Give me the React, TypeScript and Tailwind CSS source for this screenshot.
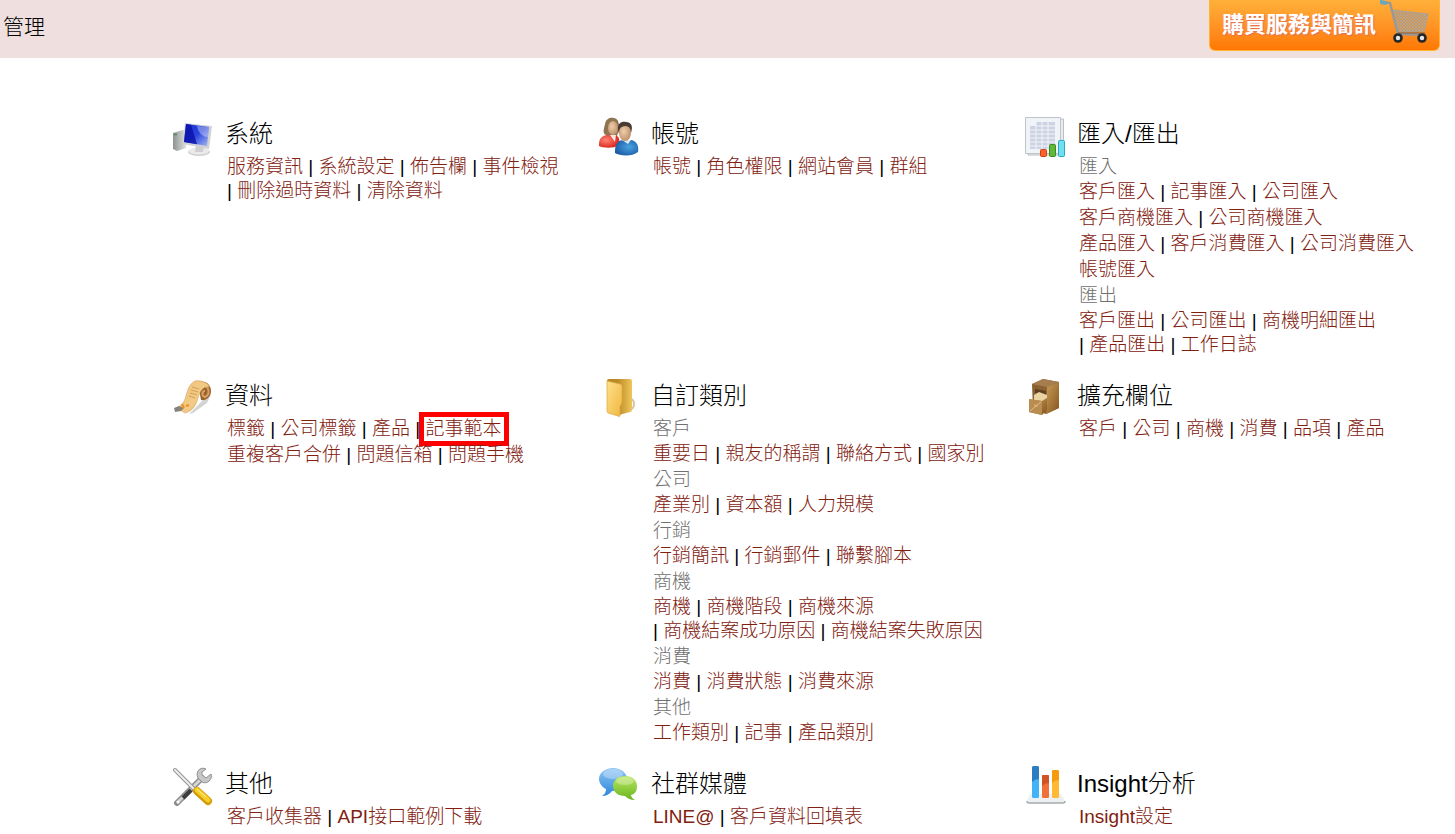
import type { ReactNode } from "react";

type Item = { text: string; marked?: boolean };
type Row = { label: string } | { links: (string | Item)[] };
type Section = { title: string; icon: ReactNode; rows: Row[] };

const SystemIcon = () => (
    <svg viewBox="0 0 40 40" className="size-10">
        <defs>
            <linearGradient id="screen" x1="0" y1="0" x2="1" y2="1">
                <stop offset="0" stopColor="#1a2fd0" />
                <stop offset="0.5" stopColor="#2a45dc" />
                <stop offset="1" stopColor="#a9bdf5" />
            </linearGradient>
            <linearGradient id="tower" x1="0" y1="0" x2="1" y2="0">
                <stop offset="0" stopColor="#8d9290" />
                <stop offset="1" stopColor="#dfe1e0" />
            </linearGradient>
        </defs>
        <path d="M0 16 L10 13 L13 15 V31 L4 34 L0 32Z" fill="url(#tower)" />
        <path d="M1 17.500h3" stroke="#4f8a58" strokeWidth="1.500" />
        <ellipse cx="26" cy="35" rx="11" ry="4" fill="#d0d0d0" />
        <ellipse cx="26" cy="34" rx="10" ry="3.500" fill="#eaeaea" />
        <path d="M23 28 L31 30 L30 35 H22Z" fill="#cfcfcf" />
        <path d="M12 6 L39 9 L36 32 L10 27Z" fill="#d0d2d6" />
        <path d="M13 7 L36 10 L34 29 L11 25Z" fill="url(#screen)" />
        <path d="M13 7 L18 7.700 L24 27.300 L11 25Z" fill="#0a12a8" opacity=".8" />
        <path d="M24 9 L36 10 L35 20 C29 20 25 15 24 9Z" fill="#fff" opacity=".35" />
    </svg>
);

const AccountIcon = () => (
    <svg viewBox="0 0 40 40" className="size-10">
        <defs>
            <radialGradient id="red" cx=".35" cy=".4" r=".7">
                <stop offset="0" stopColor="#ff8474" />
                <stop offset="1" stopColor="#d71d16" />
            </radialGradient>
            <radialGradient id="blue" cx=".6" cy=".45" r=".7">
                <stop offset="0" stopColor="#4aa3df" />
                <stop offset="1" stopColor="#17539f" />
            </radialGradient>
            <radialGradient id="skin" cx=".4" cy=".4" r=".7">
                <stop offset="0" stopColor="#efcdab" />
                <stop offset="1" stopColor="#b78a62" />
            </radialGradient>
        </defs>
        <path d="M7 18 C3 16 5 12 6 7 C7 1 12 0 15 1 C20 2 20 7 20 12 L18 19Z" fill="#8d7550" />
        <path d="M0 27 C0 20 5 18 9 18 H16 C20 19 21 23 20 28 C14 32 4 31 0 29Z" fill="url(#red)" />
        <path d="M11 18 L17 18 L16 25Z" fill="#f7e8df" />
        <ellipse cx="14" cy="11" rx="5" ry="7" fill="url(#skin)" />
        <path d="M16 34 C16 26 20 23 25 23 H32 C38 24 40 29 39 35 C33 40 21 39 16 36Z" fill="url(#blue)" />
        <path d="M23 23 L32 23 L29 27Z" fill="#d4eaf7" />
        <path d="M19 13 C18 6 23 4 27 5 C33 5 34 10 32 16 L20 17Z" fill="#493d33" />
        <ellipse cx="26" cy="16" rx="6" ry="8" fill="url(#skin)" />
        <path d="M20 12 C24 8 29 8 32 12 L32 8 L26 5 L20 8Z" fill="#493d33" />
    </svg>
);

const ImportIcon = () => (
    <svg viewBox="0 0 40 40" className="size-10">
        <path d="M3 2 H38.500 V38 H3Z" fill="#e6ebee" stroke="#b9bfc3" />
        <path d="M.5 .5 H35.500 V36.500 H.5Z" fill="#f0f4f8" stroke="#bfc4c8" />
        <path d="M11 5 H30 V32 H5 V9 H11Z" fill="#cdd3e4" />
        <path
            d="M5 13H30M5 17H30M5 21H30M5 25H30M5 29H30M11 9H30M11 5V32M17 5V32M23 5V32"
            stroke="#f4f6fb"
            strokeWidth=".9"
        />
        <rect x="15.500" y="32.500" width="6" height="7" rx="1" fill="#f9622a" stroke="#cf4216" />
        <rect x="24.500" y="27.500" width="6" height="12" rx="1" fill="#62b83b" stroke="#3b8b20" />
        <rect x="33.500" y="23.500" width="6" height="16" rx="1" fill="#72def0" stroke="#25a9c4" />
    </svg>
);

const DataIcon = () => (
    <svg viewBox="0 0 40 40" className="size-10">
        <defs>
            <linearGradient id="paper" x1="0" y1="0" x2="1" y2="1">
                <stop offset="0" stopColor="#f0c177" />
                <stop offset=".6" stopColor="#f2cb88" />
                <stop offset="1" stopColor="#d49345" />
            </linearGradient>
        </defs>
        <path d="M16 35 L29 22 L38 16 L34 24 L20 34Z" fill="#aaa" opacity=".5" />
        <path d="M24 3 C32 1 38 5 38 12 C38 18 33 22 28 21 L26 10Z" fill="#9c612c" />
        <path d="M30 7 C37 7 37 16 32 18 C28 17 29 12 32 12" fill="none" stroke="#d7a362" strokeWidth="2" />
        <path
            d="M22 2 C15 5 14 15 12 20 C10 25 7 27 4 29 L12 34 C20 32 23 26 25 19 C27 12 30 7 37 8 C34 3 27 1 22 2Z"
            fill="url(#paper)"
            stroke="#cf9548"
            strokeWidth=".5"
        />
        <path d="M19 8l7 2M18 11l7 2M17 14l7 2M16 17l6 2" stroke="#c9964c" strokeWidth=".8" />
        <path d="M1 29l5-2 5 2-3 3-6 1Z" fill="#898277" />
        <path d="M9 25l2 4M13 27l3-1" stroke="#ef8f22" strokeWidth="2" />
    </svg>
);

const FolderIcon = () => (
    <svg viewBox="0 0 40 40" className="size-10">
        <defs>
            <linearGradient id="folder" x1="0" y1="0" x2="1" y2="1">
                <stop offset="0" stopColor="#ffe08a" />
                <stop offset="1" stopColor="#efb640" />
            </linearGradient>
            <linearGradient id="folderBack" x1="0" y1="0" x2="1" y2="0">
                <stop offset=".4" stopColor="#b98827" />
                <stop offset="1" stopColor="#f0c658" />
            </linearGradient>
        </defs>
        <path d="M8 2 Q8 0 10 0 H31 Q33 0 33 2 V31 Q33 33 31 33 L20 36 L9 33Z" fill="url(#folderBack)" />
        <path d="M32 20 C36 21 36 29 32 30" fill="none" stroke="#d9c79b" strokeWidth="2" />
        <path
            d="M8 2 L21 5 Q23 5 23 7 V23 Q23 25 21 27 V37 Q20 38 19 37 L9 34 Q8 33 8 32Z"
            fill="url(#folder)"
            stroke="#dda735"
            strokeWidth=".7"
        />
    </svg>
);

const CabinetIcon = () => (
    <svg viewBox="0 0 40 40" className="size-10">
        <defs>
            <linearGradient id="wood" x1="0" y1="0" x2="1" y2="1">
                <stop offset="0" stopColor="#c99d58" />
                <stop offset="1" stopColor="#86551f" />
            </linearGradient>
        </defs>
        <path d="M7 5 L18 0 L34 3 L34 29 L21 35 L8 30Z" fill="#8a6130" />
        <path d="M7 5 L18 0 L34 3 L22 8Z" fill="#a77d4f" />
        <path d="M22 8 L34 3 V29 L21 35Z" fill="url(#wood)" />
        <path d="M10 10 L21 12 V16 L10 14Z" fill="#5d4020" />
        <path d="M9 16 L14 13 L22 16 V22 L9 22Z" fill="#ead4a4" />
        <path d="M4 20 L17 22 L22 19 V31 L17 36 L4 33Z" fill="url(#wood)" />
        <path d="M4 20 L17 22 V36 L4 33Z" fill="#b98d51" />
        <path d="M5 32 L16 23 M9 26l4 1" stroke="#dfbd88" />
    </svg>
);

const ToolsIcon = () => (
    <svg viewBox="0 0 40 40" className="size-10">
        <path d="M4 36 L29 11" stroke="#8c8c8c" strokeWidth="6" strokeLinecap="round" />
        <path d="M5 35 L30 10" stroke="#d5d5d5" strokeWidth="3" strokeLinecap="round" />
        <path d="M10 31 L18 23" stroke="#3e3e3e" strokeWidth="4" />
        <circle cx="5" cy="35" r="1.500" fill="#fff" />
        <path
            d="M33 2 C27 -1 22 5 25 11 L29 15 C34 18 40 12 38 7 L33 11 L29 8 L29 5Z"
            fill="#c7c7c7"
            stroke="#909090"
        />
        <path d="M2 3 L22 23" stroke="#969696" strokeWidth="4" strokeLinecap="round" />
        <path d="M2 3 L22 23" stroke="#ededed" strokeWidth="2" strokeLinecap="round" />
        <path d="M24 24 L35 34" stroke="#d19b0a" strokeWidth="8" strokeLinecap="round" />
        <path d="M24 23 L35 33" stroke="#f8cd27" strokeWidth="5" strokeLinecap="round" />
        <path d="M24 22 L33 30" stroke="#fff0a2" strokeWidth="1" />
    </svg>
);

const ChatIcon = () => (
    <svg viewBox="0 0 40 40" className="size-10">
        <defs>
            <linearGradient id="bubbleBlue" x1="0" y1="0" x2="0" y2="1">
                <stop offset="0" stopColor="#8ec5f5" />
                <stop offset="1" stopColor="#2c86dc" />
            </linearGradient>
            <linearGradient id="bubbleGreen" x1="0" y1="0" x2="0" y2="1">
                <stop offset="0" stopColor="#b9e661" />
                <stop offset="1" stopColor="#69b51e" />
            </linearGradient>
        </defs>
        <path
            d="M14 1 C22 1 28 6 28 12 C28 19 22 24 13 24 C10 28 6 29 3 29 C6 27 7 25 7 22 C3 20 0 16 0 12 C0 6 6 1 14 1Z"
            fill="url(#bubbleBlue)"
        />
        <ellipse cx="14" cy="7" rx="10" ry="5" fill="#fff" opacity=".3" />
        <path
            d="M26 9 C33 9 38 13 38 19 C38 24 36 27 32 28 C32 30 34 32 36 33 C31 33 28 31 26 29 C19 29 14 25 14 19 C14 13 19 9 26 9Z"
            fill="url(#bubbleGreen)"
        />
        <ellipse cx="26" cy="14" rx="9" ry="4" fill="#fff" opacity=".3" />
    </svg>
);

const InsightIcon = () => (
    <svg viewBox="0 1 40 40" className="size-10 overflow-visible">
        <path d="M5 28 H36 L40 35 Q40 37 38 37 H4 Q2 37 2 35Z" fill="#edf0f3" />
        <path d="M2 35 Q2 37 4 37 H38 Q40 37 40 35" fill="none" stroke="#a7a9ab" strokeWidth="1.500" />
        <rect x="7" y="0" width="7" height="32" rx="1.500" fill="#42b3f6" />
        <path d="M7 2 Q7 0 9 0 H12 Q14 0 14 2 V13 Q10 13 7 16Z" fill="#2b7dc2" />
        <rect x="17" y="9" width="7" height="23" rx="1.500" fill="#ef7139" />
        <path d="M17 10 Q17 9 18 9 H23 Q24 9 24 10 V17 Q20 17 17 20Z" fill="#cf5426" />
        <rect x="27" y="4" width="7" height="28" rx="1.500" fill="#ffb934" />
        <path d="M27 5 Q27 4 29 4 H32 Q34 4 34 6 V14 Q30 14 27 17Z" fill="#f89a10" />
    </svg>
);

const CartIcon = () => (
    <svg viewBox="0 0 50 44" className="h-11 w-[50px]">
        <defs>
            <pattern id="mesh" width="3" height="3" patternUnits="userSpaceOnUse">
                <rect width="3" height="3" fill="#cf9550" />
                <path d="M0 0L3 3M3 0L0 3" stroke="#b3aaa0" strokeWidth=".8" />
            </pattern>
        </defs>
        <path d="M12 10 L48 14 L44 31 L18 32Z" fill="url(#mesh)" stroke="#aaa298" strokeWidth="1.200" />
        <path d="M3 2 L10 3 L18 34 L44 35" fill="none" stroke="#9c9893" strokeWidth="2.500" strokeLinejoin="round" />
        <path d="M18 33 H45" stroke="#6f625a" strokeWidth="1" />
        <path d="M1 2 L5 3" stroke="#6aa7bd" strokeWidth="4" strokeLinecap="round" />
        <circle cx="18" cy="38" r="4.800" fill="#262626" />
        <circle cx="18" cy="38" r="2.200" fill="#e6e6e6" />
        <circle cx="42" cy="38" r="4.800" fill="#262626" />
        <circle cx="42" cy="38" r="2.200" fill="#e6e6e6" />
    </svg>
);

const sections: Section[] = [
    {
        title: "系統",
        icon: <SystemIcon />,
        rows: [{ links: ["服務資訊", "系統設定", "佈告欄", "事件檢視", "刪除過時資料", "清除資料"] }],
    },
    {
        title: "帳號",
        icon: <AccountIcon />,
        rows: [{ links: ["帳號", "角色權限", "網站會員", "群組"] }],
    },
    {
        title: "匯入/匯出",
        icon: <ImportIcon />,
        rows: [
            { label: "匯入" },
            { links: ["客戶匯入", "記事匯入", "公司匯入"] },
            { links: ["客戶商機匯入", "公司商機匯入"] },
            { links: ["產品匯入", "客戶消費匯入", "公司消費匯入"] },
            { links: ["帳號匯入"] },
            { label: "匯出" },
            { links: ["客戶匯出", "公司匯出", "商機明細匯出", "產品匯出", "工作日誌"] },
        ],
    },
    {
        title: "資料",
        icon: <DataIcon />,
        rows: [
            { links: ["標籤", "公司標籤", "產品", { text: "記事範本", marked: true }] },
            { links: ["重複客戶合併", "問題信箱", "問題手機"] },
        ],
    },
    {
        title: "自訂類別",
        icon: <FolderIcon />,
        rows: [
            { label: "客戶" },
            { links: ["重要日", "親友的稱謂", "聯絡方式", "國家別"] },
            { label: "公司" },
            { links: ["產業別", "資本額", "人力規模"] },
            { label: "行銷" },
            { links: ["行銷簡訊", "行銷郵件", "聯繫腳本"] },
            { label: "商機" },
            { links: ["商機", "商機階段", "商機來源", "商機結案成功原因", "商機結案失敗原因"] },
            { label: "消費" },
            { links: ["消費", "消費狀態", "消費來源"] },
            { label: "其他" },
            { links: ["工作類別", "記事", "產品類別"] },
        ],
    },
    {
        title: "擴充欄位",
        icon: <CabinetIcon />,
        rows: [{ links: ["客戶", "公司", "商機", "消費", "品項", "產品"] }],
    },
    {
        title: "其他",
        icon: <ToolsIcon />,
        rows: [{ links: ["客戶收集器", "API接口範例下載"] }],
    },
    {
        title: "社群媒體",
        icon: <ChatIcon />,
        rows: [{ links: ["LINE@", "客戶資料回填表"] }],
    },
    {
        title: "Insight分析",
        icon: <InsightIcon />,
        rows: [{ links: ["Insight設定"] }],
    },
];

// the separator stays with the link after it, so a wrapped line starts with "|"
const LinkList = ({ links }: { links: (string | Item)[] }) => (
    <p className="py-px leading-6">
        {links.map((link, i) => {
            const item = typeof link === "string" ? { text: link } : link;
            return (
                <span key={item.text}>
                    {i > 0 && " "}
                    <span className="whitespace-nowrap">
                        {i > 0 && "| "}
                        <a href="#" className="relative inline-block text-[#822010] hover:underline">
                            {item.text}
                            {item.marked && (
                                <span className="absolute -inset-x-[7px] -inset-y-[5px] border-5 border-[#ff0000]" />
                            )}
                        </a>
                    </span>
                </span>
            );
        })}
    </p>
);

const SectionCard = ({ section }: { section: Section }) => (
    <section className="flex items-start gap-3">
        <div className="shrink-0">{section.icon}</div>
        <div className="min-w-0">
            <h2 className="text-2xl leading-[34px] font-light text-black">{section.title}</h2>
            <div className="mt-[3px] max-w-[345px] pl-0.5 text-[19px] text-black">
                {section.rows.map((row, i) =>
                    "label" in row ? (
                        <h3 key={i} className="leading-[25px] text-[#707070]">
                            {row.label}
                        </h3>
                    ) : (
                        <LinkList key={i} links={row.links} />
                    )
                )}
            </div>
        </div>
    </section>
);

export default function App() {
    return (
        <div className="min-h-screen bg-white font-['Liberation_Sans','Noto_Sans_CJK_TC',sans-serif] font-light">
            <header className="flex h-[58px] items-start justify-between bg-[#efdfdf] pr-[15px] pl-[3px]">
                <h1 className="pt-[11px] text-[21px] leading-8 font-light text-black">管理</h1>
                <button className="flex h-[51px] items-start rounded-b-md border border-t-0 border-[#ffb52f] bg-linear-to-b from-[#ffb03a] to-[#ff7700] pr-[9px] pl-3">
                    <span className="pt-[9px] pr-1 text-[22px] leading-8 font-bold text-white [text-shadow:1px_1px_1px_#e0705a]">
                        購買服務與簡訊
                    </span>
                    <CartIcon />
                </button>
            </header>
            <main className="grid grid-cols-1 gap-y-[21px] px-4 pt-[59px] md:grid-cols-2 xl:grid-cols-3 xl:pr-1 xl:pl-[173px]">
                {sections.map((section) => (
                    <SectionCard key={section.title} section={section} />
                ))}
            </main>
        </div>
    );
}
